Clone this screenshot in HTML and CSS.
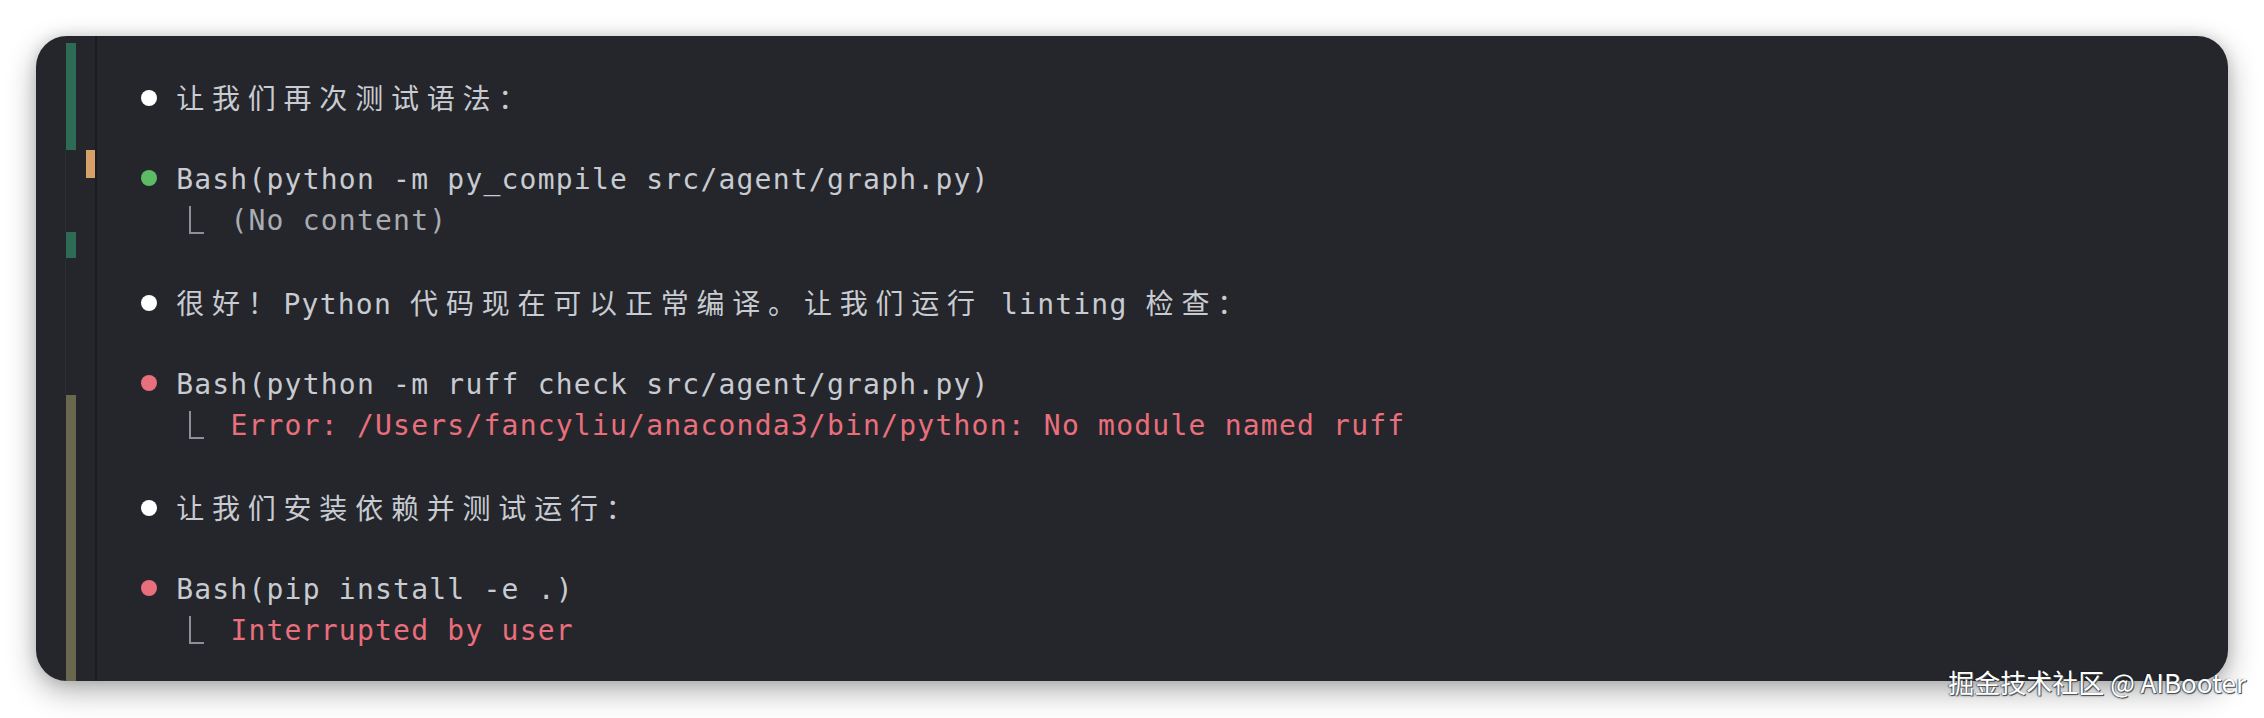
FILE: index.html
```html
<!DOCTYPE html>
<html lang="zh-CN">
<head>
<meta charset="utf-8">
<title>Terminal</title>
<link rel="stylesheet" href="styles.css">
</head>
<body>
<div class="stage">
  <div class="window">
    <div class="gutter">
      <div class="lane lane-a">
        <div class="seg gap-top"></div>
        <div class="seg bar-green g1"></div>
        <div class="seg line s1"></div>
        <div class="seg bar-green g2"></div>
        <div class="seg line s2"></div>
        <div class="seg bar-olive"></div>
      </div>
      <div class="lane lane-b">
        <div class="seg lb-top"></div>
        <div class="seg bar-orange"></div>
      </div>
    </div>
    <div class="term">
      <div class="row"><span class="dot white"></span><span class="cjk">让我们再次测试语法：</span></div>
      <div class="row"></div>
      <div class="row"><span class="dot green"></span>Bash(python -m py_compile src/agent/graph.py)</div>
      <div class="row">  <span class="elbow"></span>  <span class="dim">(No content)</span></div>
      <div class="row"></div>
      <div class="row"><span class="dot white"></span><span class="cjk">很好！</span>Python <span class="cjk">代码现在可以正常编译。让我们运行</span> linting <span class="cjk">检查：</span></div>
      <div class="row"></div>
      <div class="row"><span class="dot red"></span>Bash(python -m ruff check src/agent/graph.py)</div>
      <div class="row">  <span class="elbow"></span>  <span class="err">Error: /Users/fancyliu/anaconda3/bin/python: No module named ruff</span></div>
      <div class="row"></div>
      <div class="row"><span class="dot white"></span><span class="cjk">让我们安装依赖并测试运行：</span></div>
      <div class="row"></div>
      <div class="row"><span class="dot red"></span>Bash(pip install -e .)</div>
      <div class="row">  <span class="elbow"></span>  <span class="err">Interrupted by user</span></div>
    </div>
  </div>
  <div class="watermark">掘金技术社区 @ AIBooter</div>
</div>
</body>
</html>
```
FILE: styles.css
```css
html, body {
  margin: 0;
  padding: 0;
  background: #ffffff;
}

.stage {
  position: relative;
  width: 2264px;
  height: 718px;
  padding: 36px 36px 0 36px;
  box-sizing: border-box;
}

.window {
  width: 2192px;
  height: 645px;
  background: #24262b;
  border-radius: 31px;
  overflow: hidden;
  display: flex;
  box-shadow: 0 10px 30px rgba(0, 0, 0, 0.32), 0 0 14px rgba(0, 0, 0, 0.12);
}

.gutter {
  width: 61px;
  flex: none;
  display: flex;
  gap: 10px;
  padding-left: 30px;
  box-sizing: border-box;
  border-right: 2px solid #1b1c20;
}

.lane {
  width: 10px;
  display: flex;
  flex-direction: column;
}

.gap-top { height: 7px; }
.g1 { height: 107px; }
.s1 { height: 82px; }
.g2 { height: 26px; }
.s2 { height: 137px; }
.line { box-shadow: -1px 0 0 #2d2f35; }

.bar-green { background: #2d6b55; }
.bar-olive { background: #69684f; flex: 1; }
.lb-top { height: 114px; }
.bar-orange { height: 28px; background: #d6a068; }

.term {
  flex: 1;
  padding: 41px 0 0 43px;
  font-family: "DejaVu Sans Mono", monospace;
  font-size: 28px;
  letter-spacing: 1.22px;
  color: #c8cbd1;
}

.row {
  height: 41px;
  line-height: 41px;
  white-space: pre;
}

.cjk {
  font-family: "Noto Sans CJK SC", sans-serif;
  font-size: 28px;
  letter-spacing: 7.8px;
}

.dot {
  display: inline-block;
  width: 16px;
  height: 16px;
  border-radius: 50%;
  margin-left: 1px;
  margin-right: calc(2ch + 2.44px - 17px);
  vertical-align: 3px;
}
.dot.white { background: #ffffff; }
.dot.green { background: #5dbb66; }
.dot.red { background: #ea6f7c; }

.elbow {
  display: inline-block;
  width: 15px;
  height: 28px;
  box-sizing: border-box;
  border-left: 2px solid #8d9096;
  border-bottom: 2px solid #8d9096;
  margin-left: 13px;
  margin-right: calc(1ch + 1.22px - 28px);
  vertical-align: -4px;
}

.dim { color: #a9acb2; }
.err { color: #ea6f7c; }

.watermark {
  position: absolute;
  right: 18px;
  top: 663px;
  font-family: "Noto Sans CJK SC", "Liberation Sans", sans-serif;
  font-size: 26px;
  color: #ffffff;
  text-shadow: 1px 1px 0 #555, -1px 0 1px rgba(0,0,0,0.45), 0 1px 2px rgba(0,0,0,0.5);
  white-space: nowrap;
}
```
